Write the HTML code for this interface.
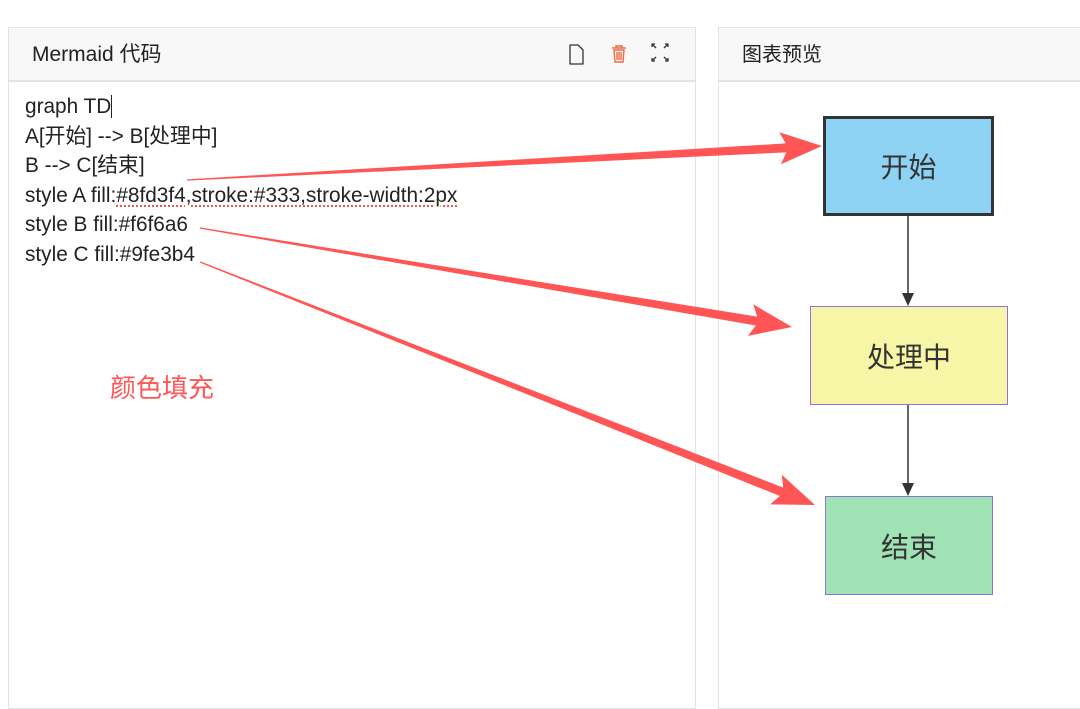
<!DOCTYPE html>
<html><head><meta charset="utf-8"><style>
body{margin:0;width:1080px;height:669px;background:#fff;position:relative;overflow:hidden;font-family:"Liberation Sans","Noto Sans CJK SC",sans-serif;}
.panel{position:absolute;top:27px;border:1px solid #e2e2e2;background:#fff;}
.hdr{height:54px;background:#f8f8f8;border-bottom:2px solid #e4e4e4;color:#222;line-height:54px;padding-left:23px;box-sizing:border-box;}
.code{position:absolute;left:25px;top:92px;font-size:20.8px;color:#222;line-height:29.6px;white-space:pre;}
.box{position:absolute;display:flex;align-items:center;justify-content:center;font-size:28px;color:#333;box-sizing:border-box;}
.sq{text-decoration:underline dotted #e55;text-underline-offset:4px;}
</style></head><body>
<div class="panel" style="left:8px;width:686px;height:680px;"><div class="hdr" style="font-size:21px">Mermaid 代码</div></div>
<div class="panel" style="left:718px;width:380px;height:680px;"><div class="hdr" style="font-size:20px">图表预览</div></div>
<svg style="position:absolute;left:0;top:0" width="1080" height="669">
<g fill="none" stroke="#333" stroke-width="1.3" stroke-linejoin="round">
<path d="M570 45h8l5 5v14h-13z"/>
<path d="M652 47v-3h3M665 44h3v3M652 58v3h3M668 58v3h-3M652 44l4 4M668 44l-4 4M652 61l4-4M668 61l-4-4"/>
</g>
<g fill="none" stroke="#f06a45" stroke-width="1.4"><path d="M612 48h14M616 48v-2h6v2M614 50h10l-1 12h-8z M617 52v8M619 52v8M621 52v8"/></g>
<g stroke="#333" stroke-width="1.5"><line x1="908" y1="216" x2="908" y2="295"/><line x1="908" y1="405" x2="908" y2="485"/></g>
<g fill="#333"><polygon points="902,293 914,293 908,306"/><polygon points="902,483 914,483 908,496"/></g>
<g id="arr" fill="#f55"></g>
</svg>
<div class="box" style="left:823px;top:116px;width:171px;height:100px;background:#8fd3f4;border:3.5px solid #333;">开始</div>
<div class="box" style="left:810px;top:306px;width:198px;height:99px;background:#f6f6a6;border:1.5px solid #9370db;">处理中</div>
<div class="box" style="left:825px;top:496px;width:168px;height:99px;background:#9fe3b4;border:1.5px solid #9370db;">结束</div>
<div class="code">graph TD<span style="border-left:1px solid #222;"></span>
A[开始] --&gt; B[处理中]
B --&gt; C[结束]
style A fill:<span class="sq">#8fd3f4</span>,<span class="sq">stroke:#333,stroke-width:2px</span>
style B fill:#f6f6a6
style C fill:#9fe3b4</div>
<div style="position:absolute;left:110px;top:368px;font-size:26px;color:#f55;">颜色填充</div>
<script>
function arrow(x1,y1,x2,y2){
 var dx=x2-x1,dy=y2-y1,L=Math.hypot(dx,dy),ux=dx/L,uy=dy/L,nx=-uy,ny=ux;
 var hl=42,hw=16,w0=0.6,w1=4.5;
 var bx=x2-ux*hl,by=y2-uy*hl;
 var p=[[x1+nx*w0,y1+ny*w0],[bx+ux*6+nx*w1,by+uy*6+ny*w1],[bx+nx*hw,by+ny*hw],[x2,y2],[bx-nx*hw,by-ny*hw],[bx+ux*6-nx*w1,by+uy*6-ny*w1],[x1-nx*w0,y1-ny*w0]];
 var g=document.getElementById('arr');
 var e=document.createElementNS('http://www.w3.org/2000/svg','polygon');
 e.setAttribute('points',p.map(function(q){return q[0].toFixed(1)+','+q[1].toFixed(1)}).join(' '));
 g.appendChild(e);
}
arrow(187,180,822,146);
arrow(200,228,792,327);
arrow(200,262,815,505);
</script>
</body></html>
